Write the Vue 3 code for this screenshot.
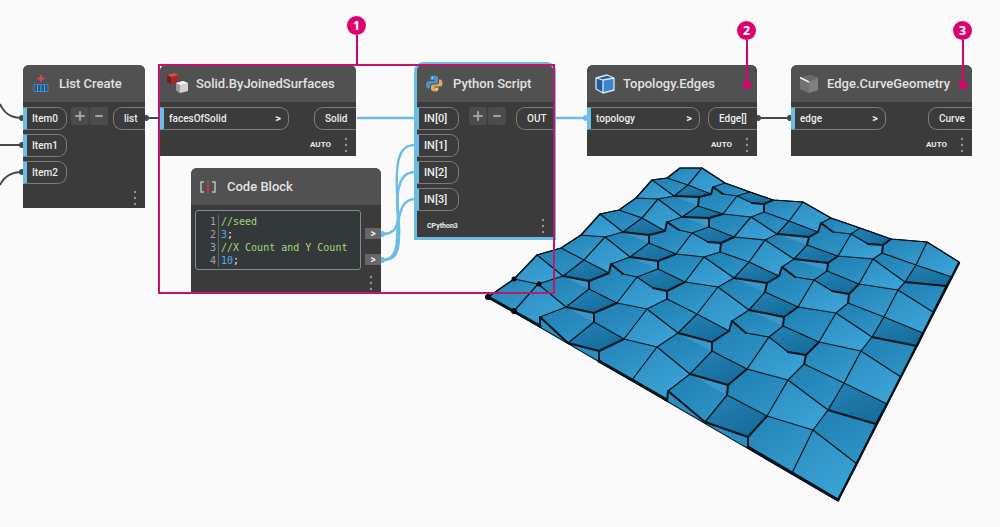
<script setup>
const nodes = [
  { id: 'list', title: 'List Create', inputs: ['Item0', 'Item1', 'Item2'], output: 'list', variable: true },
  { id: 'solid', title: 'Solid.ByJoinedSurfaces', inputs: ['facesOfSolid'], output: 'Solid', levels: true, footer: 'AUTO' },
  { id: 'python', title: 'Python Script', inputs: ['IN[0]', 'IN[1]', 'IN[2]', 'IN[3]'], output: 'OUT', variable: true, footer: 'CPython3' },
  { id: 'topology', title: 'Topology.Edges', inputs: ['topology'], output: 'Edge[]', levels: true, footer: 'AUTO' },
  { id: 'edge', title: 'Edge.CurveGeometry', inputs: ['edge'], output: 'Curve', levels: true, footer: 'AUTO' },
]

const code = [
  { text: '//seed', kind: 'comment' },
  { text: '3', kind: 'number', end: ';' },
  { text: '//X Count and Y Count', kind: 'comment' },
  { text: '10', kind: 'number', end: ';' },
]

// Surface vertices, front row first. "S" and "T" vertices are split in height:
// the second pair is the other level. "v" is an extra bend on the way to the next vertex.
const rows = [
  '488 297|514 311|540 327 T 540 317|568 343|599 351 S 599 362|632 380|667 401 T 668 391|705 422|748 437 S 748 448|792 473|838 500',
  '514 279|538 284|566 307|594 313 S 594 322|624 339|657 347|690 374|728 385 S 727 395|767 416|813 430|857 464',
  '537 255|563 276|589 281 S 589 289|617 303|647 309|678 333|712 342 S 712 351|747 369|788 380|828 410|876 424 S 876 424',
  '561 248|584 260|609 273 T 611 264|v 623 274|637 277|v 653 288|667 291 S 667 299|697 314|729 331 T 732 321|v 746 333|769 337|v 788 352|806 355 S 804 364|844 383|887 404',
  '581 235|605 237|630 257|658 261 S 658 269|685 282|718 287|749 310|784 317 S 783 326|819 342|861 351|901 377',
  '600 214|623 232|649 235 S 649 243|676 254|704 257|734 278|767 283 S 765 292|798 307|836 313|872 337|917 346 S 917 346',
  '619 210|642 218|665 231 T 667 222|v 679 230|692 233|v 708 242|721 243 S 720 252|749 262|779 276 T 782 267|v 795 277|814 280|v 832 291|849 294 S 848 303|884 317|923 333',
  '636 198|658 199|682 217|709 218 S 709 227|734 237|765 240|794 259|828 263 S 827 271|859 284|898 290|933 312',
  '652 180|674 196|699 197 S 698 206|723 214|751 217|777 234|809 237 S 807 245|838 256|873 259|905 282|946 286 S 946 286',
  '667 178|688 185|711 194 T 713 187|v 723 194|737 196|v 752 203|764 204 S 764 212|789 221|818 232 T 821 223|v 833 232|851 234|v 868 244|883 245 S 882 253|916 265|952 277',
  '680 168|702 168|725 183|750 192|773 200|803 202|831 218|860 228|891 239|927 242|959 262',
].map((row) => {
  const list = []
  let bend = null
  for (const item of row.split('|')) {
    if (item.startsWith('v')) {
      bend = item.slice(2).replace(' ', ',')
      continue
    }
    const [x, y, kind, x2, y2] = item.split(' ')
    const p = `${x},${y}`
    const q = kind ? `${x2},${y2}` : p
    list.push({
      kind,
      p,
      q,
      left: p,
      front: kind === 'S' ? q : p,
      right: q,
      back: kind === 'T' ? q : p,
      bend,
    })
    bend = null
  }
  return list
})

const shades = [
  ['soft', 'light', 'mid', 'dark'],
  ['light', 'mid', 'dark', 'mid'],
  ['mid', 'dark', 'mid', 'light'],
]

const cells = []
let thin = ''
let thick = ''
for (let j = 0; j < 11; j++) {
  for (let i = 0; i < 11; i++) {
    const a = rows[j][i]
    const d = rows[j][i + 1]
    const b = rows[j + 1]?.[i]
    if (a.kind) thick += `M${a.p}L${a.q}`
    if (d) {
      const from = `M${a.right}L`
      if (d.bend) {
        if (a.kind === 'T') thick += `${from}${d.bend}`
        else thin += `${from}${d.bend}`
        if (d.kind === 'S') thick += `M${d.bend}L${d.left}`
        else thin += `M${d.bend}L${d.left}`
      } else if (a.kind === 'T' || d.kind === 'S' || (j === 0 && (i === 3 || i === 7))) thick += from + d.left
      else thin += from + d.left
    }
    if (b) {
      const line = `M${a.back}L${b.front}`
      if (a.kind === 'S' || b.kind === 'T') thick += line
      else thin += line
    }
    if (b && d) {
      const c = rows[j + 1][i + 1]
      cells.push({
        fill: `url(#${shades[j % 3][i % 4]})`,
        points: [a.right, a.back, b.front, b.right, c.bend, c.left, c.front, d.back, d.left, d.bend].filter(Boolean).join(' '),
        lip: c.kind === 'S' && !c.bend ? `${b.right} ${c.left} ${c.front}` : null,
      })
    }
  }
}
const lips = cells.filter((c) => c.lip)
const gradients = [
  { id: 'light', from: '#2b8dc0', to: '#3ba3d6' },
  { id: 'soft', from: '#2282b5', to: '#349acc' },
  { id: 'mid', from: '#1f7fb1', to: '#2f93c5' },
  { id: 'dark', from: '#2583b4', to: '#146c9c' },
]
const silhouette =
  '488,297 514,279 537,255 561,248 581,235 600,214 619,210 636,198 652,180 667,178 680,168 702,168 725,183 750,192 773,200 803,202 831,218 860,228 891,239 927,242 959,262 838,501'
</script>

<template>
  <main class="canvas">
    <svg class="layer" aria-hidden="true">
      <defs>
        <linearGradient v-for="g in gradients" :id="g.id" :key="g.id" x1="0" y1="0" x2="0.7" y2="1">
          <stop offset="0" :stop-color="g.from" />
          <stop offset="1" :stop-color="g.to" />
        </linearGradient>
      </defs>
      <polygon :points="silhouette" fill="#2b8dc0" />
      <polygon v-for="(c, i) in cells" :key="i" :points="c.points" :fill="c.fill" />
      <polygon v-for="(c, i) in lips" :key="'l' + i" :points="c.lip" fill="#3c98c8" />
      <g fill="none" stroke="#04141d" stroke-linejoin="round" stroke-linecap="round">
        <path :d="thin" stroke-width="1.2" />
        <path :d="thick" stroke-width="2" />
        <polygon :points="silhouette" stroke-width="1.2" />
        <path d="M488 297L540 326M599 361L667 400M748 447L838 500" stroke-width="3" />
        <path d="M838 500L959 263" stroke-width="2.4" />
      </g>
      <g fill="#050505">
        <circle cx="488" cy="297" r="3" />
        <circle cx="514" cy="311" r="3" />
        <circle cx="514" cy="279" r="2.5" />
        <circle cx="539" cy="284" r="2.5" />
      </g>
      <g fill="none" stroke="#484848" stroke-width="2">
        <path d="M0 104C4 113 10 118 22 118M0 145H22M0 185C4 177 11 172 22 172M146 118H160M758 118H791" />
      </g>
      <g fill="none" stroke="#6bbde6" stroke-width="2.4">
        <path d="M357 118H415M556 118H587" />
        <path d="M382 234C394 234 398 228 398 214C398 200 396 190 397 172C398 152 404 145 415 145" />
        <path d="M382 260C395 260 399 254 399 236C400 220 397 216 397 202C398 180 404 172 415 172" />
        <path d="M382 260C393 260 397 252 397 238C398 208 404 199 415 199" />
      </g>
      <g fill="#484848">
        <circle cx="22" cy="118" r="3" /><circle cx="22" cy="145" r="3" /><circle cx="22" cy="172" r="3" />
        <circle cx="146" cy="118" r="3" /><circle cx="758" cy="118" r="3" /><circle cx="790" cy="118" r="3" />
      </g>
      <g fill="#6bbde6">
        <circle cx="382" cy="234" r="3" /><circle cx="382" cy="260" r="3" /><circle cx="586" cy="118" r="3" />
      </g>
    </svg>

    <article v-for="n in nodes" :key="n.id" class="node" :class="n.id">
      <header class="head">
        <svg v-if="n.id === 'list'" class="icon" viewBox="0 0 24 24">
          <path d="M12 3v7M8.500 6.500h7" stroke="#d9484b" stroke-width="1.800" />
          <path d="M5 12.500h14v7H5z" fill="#24567f" stroke="#3f86c2" />
          <path d="M8.500 13v7M12 13v7M15.500 13v7" stroke="#5b9fd6" />
        </svg>
        <svg v-else-if="n.id === 'solid'" class="icon" viewBox="0 0 24 24">
          <path d="M1 3l8-2 3 2v7l-7 2-4-2z" fill="#a3282b" />
          <path d="M1 3l8-2 3 2-7 2z" fill="#cf5455" />
          <path d="M1 3l4 2v7l-4-2z" fill="#7d1c1f" />
          <path d="M10 11l7-2 5 2v8l-8 2-4-3z" fill="#d2d2d2" />
          <path d="M10 11l7-2 5 2-8 2z" fill="#f0f0f0" />
          <path d="M10 11l4 2v8l-4-3z" fill="#9d9d9d" />
        </svg>
        <svg v-else-if="n.id === 'python'" class="icon" viewBox="0 0 24 24">
          <path d="M11 3.500C7.500 3.500 7.500 5 7.500 6v2h4v1H6c-2 0-3 1.500-3 4s1 3.500 2.500 3.500H7V14c0-1.500 1-2.500 2.500-2.500h3.500c1.300 0 2-1 2-2V6c0-1.500-1-2.500-4-2.500z" fill="#4a93d0" />
          <path d="M12 19.500c3.500 0 3.500-1.500 3.500-2.500v-1.500h-4v-1H17c2 0 2.500-1.500 2.500-3.500S18.500 7.500 17 7.500h-1v2.500c0 1.500-1 2.500-2.500 2.500H10c-1.300 0-2 1-2 2V17c0 1.500 1 2.500 4 2.500z" fill="#d9ab5b" />
          <circle cx="9.300" cy="5.700" r=".8" fill="#e8eef4" /><circle cx="13.700" cy="17.200" r=".8" fill="#fff" />
        </svg>
        <svg v-else-if="n.id === 'topology'" class="icon" viewBox="0 0 24 24">
          <path d="M3 6l11-3 7 3v12l-11 3-7-4z" fill="#3b86cb" />
          <path d="M3 6l7 2v13l-7-4z" fill="#235c98" />
          <path d="M3 6l11-3 7 3-11 2z" fill="#2a5d91" />
          <path d="M3 6l11-3 7 3v12l-11 3-7-4zM3 6l7 2 11-2M10 8v13" fill="none" stroke="#d3e5f5" stroke-width="1.300" stroke-linejoin="round" />
        </svg>
        <svg v-else class="icon" viewBox="0 0 24 24">
          <path d="M3 6l10-3 8 3v12l-9 3-9-4z" fill="#808080" />
          <path d="M3 6l9 4v11l-9-4z" fill="#717171" />
          <path d="M3 6l10-3 8 3-9 4z" fill="#696969" />
          <path d="M3 5.500l9 4.500" stroke="#eee" stroke-width="1.500" />
        </svg>
        <h2>{{ n.title }}</h2>
      </header>
      <div class="ports">
        <ul class="inputs">
          <li v-for="p in n.inputs" :key="p" class="port in">
            <span>{{ p }}</span>
            <button v-if="n.levels" type="button" class="chevron" aria-label="Levels">&gt;</button>
          </li>
        </ul>
        <div v-if="n.variable" class="pm">
          <button type="button" aria-label="Add input"><svg viewBox="0 0 17 17"><path d="M4 8.500h9M8.500 4v9" /></svg></button>
          <button type="button" aria-label="Remove input"><svg viewBox="0 0 17 17"><path d="M5 8.500h7" /></svg></button>
        </div>
        <div class="port out">{{ n.output }}</div>
      </div>
      <footer class="foot" :class="{ engine: n.id === 'python' }">
        <span>{{ n.footer }}</span>
        <button type="button" class="more" aria-label="Node menu">
          <svg viewBox="0 0 4 16"><circle cx="2" cy="2" r="1.200" /><circle cx="2" cy="8" r="1.200" /><circle cx="2" cy="14" r="1.200" /></svg>
        </button>
      </footer>
    </article>

    <article class="node block">
      <header class="head">
        <svg class="icon" viewBox="0 0 24 24" fill="none">
          <path d="M7 7H4v10h3M15 7h3v10h-3" stroke="#bdbdbd" stroke-width="1.500" />
          <path d="M11 5v14" stroke="#d63a3a" stroke-width="1.500" />
        </svg>
        <h2>Code Block</h2>
      </header>
      <div class="body">
        <ol class="code">
          <li v-for="(l, i) in code" :key="i">
            <span class="num">{{ i + 1 }}</span>
            <code><span :class="l.kind">{{ l.text }}</span>{{ l.end }}</code>
          </li>
        </ol>
        <div class="outs">
          <button type="button" aria-label="Output of line 2">&gt;</button>
          <button type="button" aria-label="Output of line 4">&gt;</button>
        </div>
      </div>
      <footer class="foot">
        <span></span>
        <button type="button" class="more" aria-label="Node menu">
          <svg viewBox="0 0 4 16"><circle cx="2" cy="2" r="1.200" /><circle cx="2" cy="8" r="1.200" /><circle cx="2" cy="14" r="1.200" /></svg>
        </button>
      </footer>
    </article>

    <div class="frame"></div>
    <div class="callout one"><b>1</b></div>
    <div class="callout two dot"><b>2</b></div>
    <div class="callout three dot"><b>3</b></div>
  </main>
</template>

<style>
body { background: #fafafa; }
</style>

<style scoped>
.canvas {
  position: relative;
  min-height: 100vh;
  overflow: hidden;
  background: #fafafa;
  font-family: Roboto, "Noto Sans", sans-serif;
  color: #ececec;
}
.layer { position: absolute; inset: 0; width: 100%; height: 100%; }
button { border: 0; padding: 0; background: none; color: inherit; font: inherit; }
ul, ol { list-style: none; margin: 0; padding: 0; }

.node {
  position: absolute;
  box-sizing: border-box;
  background: #3b3b3b;
  border-radius: 6px 6px 0 0;
}
.list { left: 23px; top: 65px; width: 122px; }
.solid { left: 160px; top: 65px; width: 196px; }
.python { left: 417px; top: 65px; width: 136px; box-shadow: 0 0 0 3px #6bbde6; }
.topology { left: 587px; top: 65px; width: 170px; }
.edge { left: 791px; top: 65px; width: 181px; }
.block { left: 191px; top: 168px; width: 190px; }

.head {
  display: flex;
  align-items: center;
  gap: 6px;
  height: 37px;
  padding-left: 6px;
  border-radius: 6px 6px 0 0;
  background: #515151;
}
.icon { width: 24px; height: 24px; flex: none; }
h2 { margin: 0; font-size: 13px; font-weight: 500; line-height: 20px; white-space: nowrap; color: #e2e2e2; }

.ports { display: flex; align-items: flex-start; padding-top: 5px; }
.inputs { display: flex; flex-direction: column; gap: 4px; }
.port {
  box-sizing: border-box;
  display: flex;
  align-items: center;
  justify-content: space-between;
  height: 23px;
  border: 1px solid #7c7c7c;
  font-size: 10px;
  font-weight: 500;
  line-height: 16px;
  white-space: nowrap;
}
.in { width: 44px; padding: 0 7px 0 5px; border-left: 4px solid #6bbde6; border-radius: 0 9px 9px 0; }
.solid .in { width: 129px; }
.topology .in { width: 113px; }
.edge .in { width: 95px; }
.python .in { width: 42px; border-left-width: 2px; font-size: 11px; }
.chevron { font-size: 11px; font-weight: 700; }
.out { width: 42px; margin-left: auto; padding: 0 8px 0 10px; border-right: 0; border-radius: 9px 0 0 9px; }
.list .out { width: 32px; }
.python .out { width: 37px; }
.topology .out { width: 49px; }
.edge .out { width: 44px; }
.pm { display: flex; gap: 1px; padding-left: 4px; }
.python .pm { padding-left: 10px; }
.pm button { display: flex; width: 18px; height: 18px; background: #4b4b4b; border-radius: 2px; }
.pm svg { width: 18px; height: 18px; }
.pm path { stroke: #a0a0a0; stroke-width: 2; }

.foot {
  box-sizing: border-box;
  display: flex;
  align-items: center;
  justify-content: space-between;
  height: 26px;
  padding: 4px 8px 0 10px;
  font-size: 8px;
  font-weight: 700;
  line-height: 14px;
}
.foot span { margin-left: auto; margin-right: 13px; }
.foot.engine { font-size: 7px; }
.foot.engine span { margin-left: 0; }
.list .foot { height: 24px; }
.more { display: flex; }
.more svg { width: 4px; height: 16px; fill: #949494; }

.body { display: flex; padding-top: 5px; }
.code {
  box-sizing: border-box;
  width: 166px;
  margin-left: 4px;
  padding: 4px 0 2px 14px;
  border: 1px solid #8a8a8a;
  border-radius: 3px;
  background: #33383a;
  font-family: "DejaVu Sans Mono", monospace;
  font-size: 10px;
  line-height: 13px;
}
.code li { display: flex; }
.num { width: 7px; padding-right: 1px; border-right: 1px solid #666; color: #a3a3a3; }
code { padding-left: 2px; font: inherit; white-space: pre; }
.comment { color: #a5d875; }
.number { color: #58ace0; }
.outs { display: flex; flex-direction: column; gap: 15px; margin-left: auto; padding-top: 18px; }
.outs button { width: 16px; height: 11px; background: #676767; font-size: 10px; font-weight: 700; line-height: 11px; }
.block .foot { height: 22px; }

.frame { position: absolute; left: 158px; top: 64px; width: 397px; height: 230px; box-sizing: border-box; border: 2px solid #c4146b; }
.callout { position: absolute; display: flex; flex-direction: column; align-items: center; width: 19px; }
.callout b { width: 19px; height: 19px; border-radius: 50%; background: #dd006e; color: #fff; font-family: "Noto Sans", sans-serif; font-size: 13px; line-height: 19px; text-align: center; }
.callout::after { content: ""; width: 2px; height: 30px; background: #dd006e; }
.callout.dot::after { height: 45px; }
.dot::before { content: ""; position: absolute; bottom: -4px; left: 6px; width: 8px; height: 8px; border-radius: 50%; background: #dd006e; }
.one { left: 347px; top: 16px; }
.two { left: 737px; top: 21px; }
.three { left: 953px; top: 21px; }
</style>
